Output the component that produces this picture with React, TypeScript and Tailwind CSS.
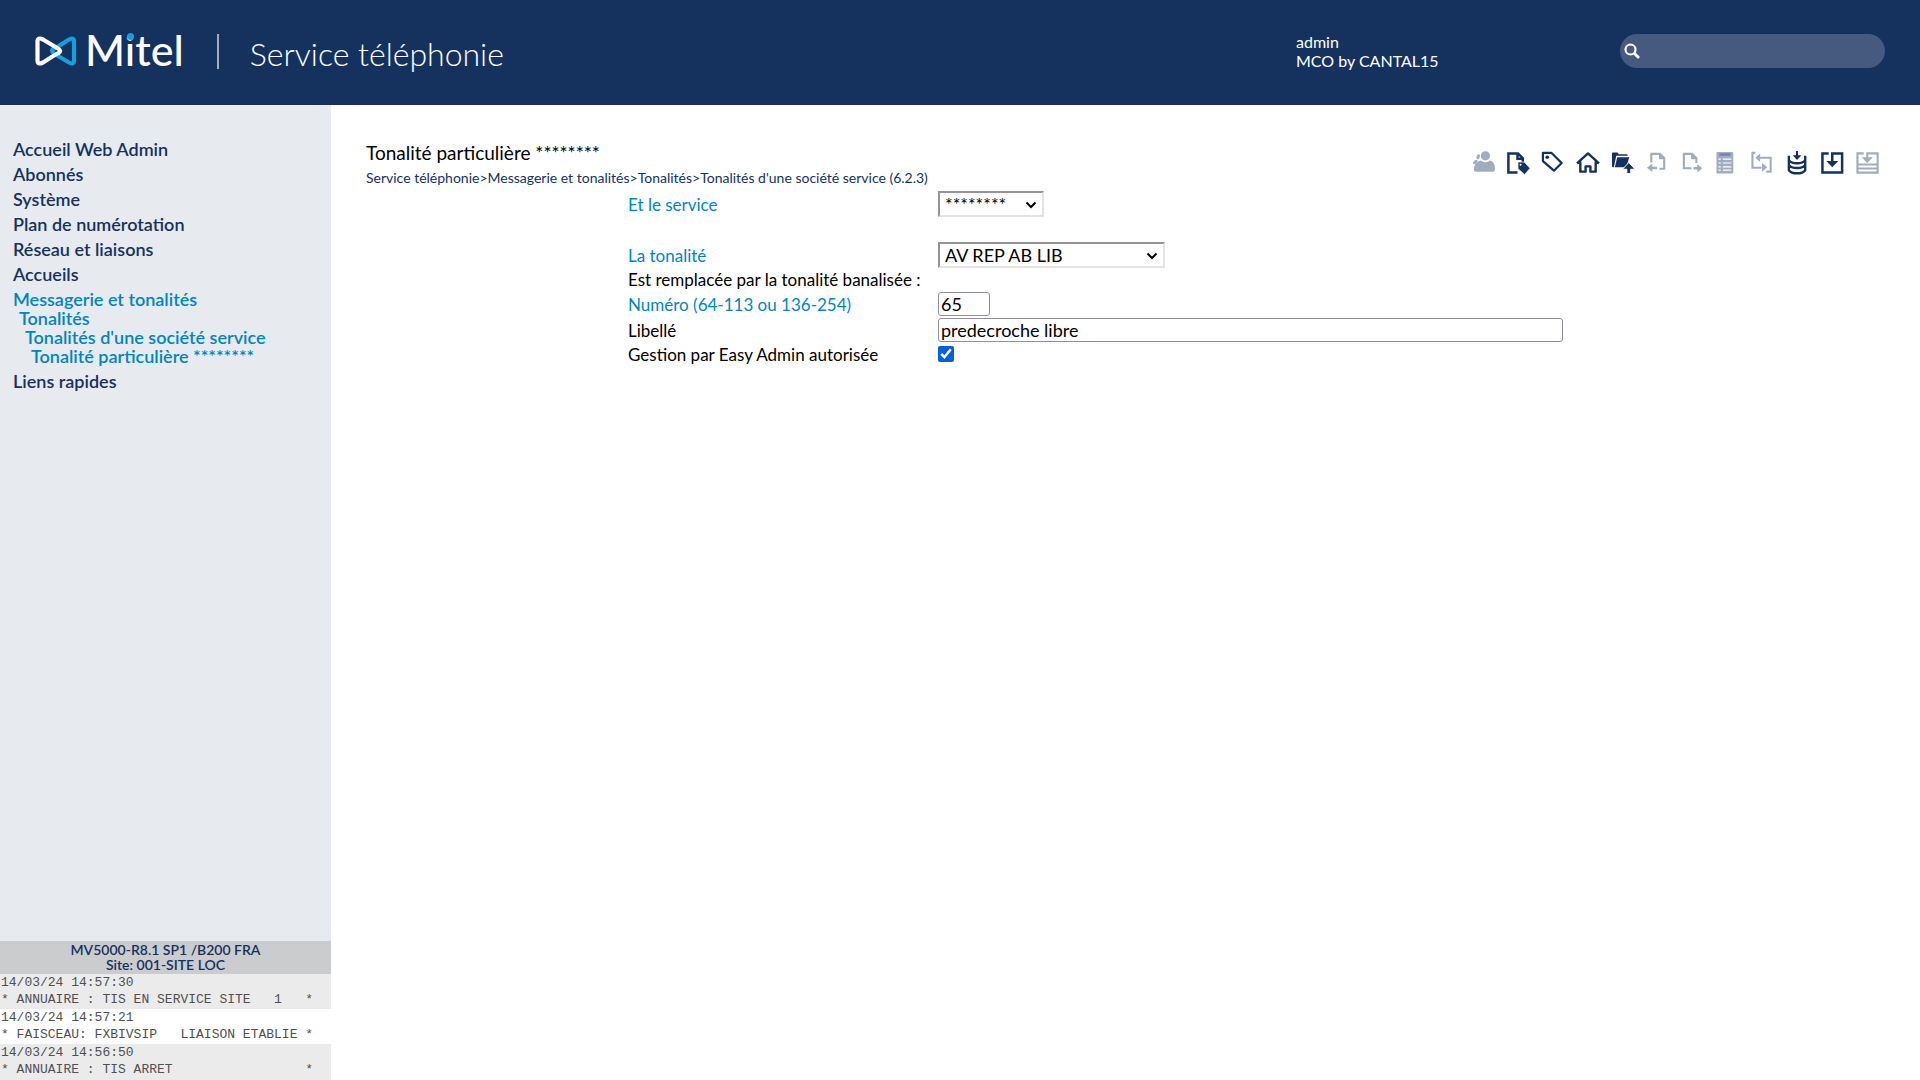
import { useState } from "react";
import type { ReactNode } from "react";

const menu = [
  { label: "Accueil Web Admin" },
  { label: "Abonnés" },
  { label: "Système" },
  { label: "Plan de numérotation" },
  { label: "Réseau et liaisons" },
  { label: "Accueils" },
  { label: "Messagerie et tonalités", open: true },
  { label: "Liens rapides" },
];

const subMenu = [
  { label: "Tonalités", indent: "pl-[6px]" },
  { label: "Tonalités d'une société service", indent: "pl-[12px]" },
  { label: "Tonalité particulière ********", indent: "pl-[18px]" },
];

const logs = [
  { time: "14/03/24 14:57:30", text: "* ANNUAIRE : TIS EN SERVICE SITE   1   *" },
  { time: "14/03/24 14:57:21", text: "* FAISCEAU: FXBIVSIP   LIAISON ETABLIE *" },
  { time: "14/03/24 14:56:50", text: "* ANNUAIRE : TIS ARRET                 *" },
];

const crumbs = ["Service téléphonie", "Messagerie et tonalités", "Tonalités", "Tonalités d'une société service (6.2.3)"];

const tools: { name: string; off?: boolean; art: ReactNode }[] = [
  {
    name: "Utilisateurs",
    off: true,
    art: (
      <g fill="currentColor">
        <circle cx="15" cy="5" r="4.800" />
        <path d="M5 21.500q-2 0-2-2c0-5 3-8.500 7-9.500q5 3.500 10 0c3.500 1 5 4.500 5 9q0 2.500-2 2.500z" />
        <ellipse cx="7.500" cy="6" rx="1.700" ry="2.700" transform="rotate(20 7.500 6)" />
        <ellipse cx="4.500" cy="11.500" rx="1.600" ry="2.900" transform="rotate(50 4.500 11.500)" />
      </g>
    ),
  },
  {
    name: "Page étiquetée",
    art: (
      <g>
        <path d="M12 22.500H2.500V2.500h10l5 5v5M12 2.500V8h5.500" fill="none" stroke="currentColor" strokeWidth="2.600" />
        <path d="M12.500 11.500h6.500l6 6.500-5.500 6.500-7-6z" fill="currentColor" stroke="#e7eaef" strokeWidth="0.800" />
        <circle cx="15.200" cy="14.300" r="1" fill="#fff" />
      </g>
    ),
  },
  {
    name: "Étiquette",
    art: (
      <g>
        <path d="M2 2h9l10.500 10.500-8 8L2 10.500z" fill="none" stroke="currentColor" strokeWidth="2.300" strokeLinejoin="round" />
        <circle cx="6.500" cy="6.500" r="1.900" fill="currentColor" />
      </g>
    ),
  },
  {
    name: "Accueil",
    art: (
      <path d="M1 13L12.500 2.500 24 13M4.500 11v10.500h5.500v-5.500h5v5.500h5.500V11" fill="none" stroke="currentColor" strokeWidth="2.500" strokeLinejoin="round" />
    ),
  },
  {
    name: "Dossier parent",
    art: (
      <g fill="currentColor">
        <path d="M1 2.500q0-1 1-1h4.500q1 0 1.500 2H16q1.500 0 1.500 1.500H5.500L3 17H2q-1 0-1-1z" />
        <path d="M6.500 6.500h12.500l-2.500 8.500-2 2H4z" />
        <path d="M18.500 12l6.500 7h-4.500v4.500h-4V19H12z" stroke="#fff" strokeWidth="1" />
      </g>
    ),
  },
  {
    name: "Page précédente",
    off: true,
    art: (
      <g>
        <path d="M5.500 12V3h9l4.500 4.500V18.500h-5" fill="none" stroke="currentColor" strokeWidth="2.200" />
        <path d="M13.500 2.500V8.500H19.500z" fill="currentColor" />
        <path d="M1 17.500l5.500-4.500v3.300h5v2.600h-5V22z" fill="currentColor" />
      </g>
    ),
  },
  {
    name: "Page suivante",
    off: true,
    art: (
      <g>
        <path d="M11 18H3V3h8.500l4.500 4.500V12.500" fill="none" stroke="currentColor" strokeWidth="2.200" />
        <path d="M10.500 2.500V8.500H16.500z" fill="currentColor" />
        <path d="M22 18l-5-4.500v3.200h-4v2.600h4V22.500z" fill="currentColor" />
      </g>
    ),
  },
  {
    name: "Liste",
    off: true,
    art: (
      <g>
        <rect x="0.500" y="1" width="17.500" height="22.500" rx="1" fill="currentColor" />
        <path d="M3.500 3.700h11.500" stroke="#7084a6" strokeWidth="2.500" />
        <path d="M2.500 8.500h2.500M7 8.500h9M2.500 12.500h2.500M7 12.500h9M2.500 16.500h2.500M7 16.500h9M2.500 20h2.500M7 20h9" stroke="#fff" strokeWidth="1.200" />
      </g>
    ),
  },
  {
    name: "Boucle",
    off: true,
    art: (
      <g>
        <path d="M4.500 2H1.500V17.500H11M8 7h12.500v14.500H16" fill="none" stroke="currentColor" strokeWidth="2.200" />
        <path d="M4.500 7l5-4.500v9zM17 17l-5.500-4.500v9z" fill="currentColor" />
      </g>
    ),
  },
  {
    name: "Base de données",
    art: (
      <g fill="none" stroke="currentColor">
        <path d="M3 5v15c3 4.300 14 4.300 17 0V5M3 9.500c3 4.300 14 4.300 17 0M3 14.500c3 4.300 14 4.300 17 0" strokeWidth="2.500" />
        <path d="M11.500 0v6" strokeWidth="2.200" />
        <path d="M7 4.500h9L11.500 9.500z" fill="currentColor" stroke="none" />
      </g>
    ),
  },
  {
    name: "Enregistrer",
    art: (
      <g>
        <path d="M8 2.500H1.500v20H22v-20H11.700V12" fill="none" stroke="currentColor" strokeWidth="2.600" />
        <path d="M5.500 10.500h12.500l-6.200 6.500z" fill="currentColor" />
      </g>
    ),
  },
  {
    name: "Tout enregistrer",
    off: true,
    art: (
      <g>
        <path d="M8 2.500H1.500v20H22.500v-20H11.700V8M1.500 14H22.500M1.500 18.200H22.500" fill="none" stroke="currentColor" strokeWidth="2.200" />
        <path d="M6 6.500h11.500l-5.800 6z" fill="currentColor" />
      </g>
    ),
  },
];

function Logo() {
  return (
    <a href="#" aria-label="Mitel" className="flex items-center gap-[8px] text-white">
      <svg width="42" height="30" viewBox="0 0 42 30" fill="none" strokeWidth="4.200" strokeLinejoin="round" strokeLinecap="round">
        <path d="M23 10.500L34 3.500Q39 0.800 39 5.500V24.500Q39 29.200 34 26.500L19 17.500Q15 14.500 19 12.500L23 10.500" stroke="#159fdb" />
        <path d="M19 19.500L8 26.500Q2.500 29.200 2.500 24.500V5.500Q2.500 0.800 8 3.500L23 12.500Q27 15 23.500 17L19 19.500" stroke="#fff" />
      </svg>
      <span className="pb-[3px] text-[43px] leading-[43px] font-medium">
        M
        <span className="relative">
          i
          <span className="absolute inset-x-0 top-[9px] mx-auto h-[7px] w-[7px] rounded-full bg-[#159fdb]" />
        </span>
        tel
      </span>
    </a>
  );
}

function Select({ id, value, width }: { id: string; value: string; width: string }) {
  return (
    <div className={"relative " + width}>
      <select
        id={id}
        className="block h-[26px] w-full appearance-none border-2 border-t-[#949494] border-l-[#949494] border-r-[#e3e3e3] border-b-[#e3e3e3] bg-white pl-[5px] text-[18px] leading-[22px] text-black"
      >
        <option>{value}</option>
      </select>
      <svg className="pointer-events-none absolute right-[7px] top-[10px]" width="12" height="8" viewBox="0 0 12 8" fill="none" stroke="#000" strokeWidth="2">
        <path d="M1.500 1.500L6 6l4.500-4.500" />
      </svg>
    </div>
  );
}

export default function App() {
  const [num, setNum] = useState("65");
  const [label, setLabel] = useState("predecroche libre");
  const [easy, setEasy] = useState(true);

  return (
    <div className="flex min-h-screen flex-col bg-white font-['Lato',sans-serif] text-[17px] leading-[19px] text-black">
      <header className="flex h-[105px] shrink-0 items-center bg-[#15325f] px-[35px] pb-[3px] text-white">
        <Logo />
        <div className="ml-[33px] h-[35px] w-[2px] bg-[#a1adbf]" />
        <h1 className="ml-[31px] flex-1 pt-[5px] text-[32px] leading-[38px] font-light">Service téléphonie</h1>
        <div className="w-[324px] text-[16px]">
          <div>admin</div>
          <div>MCO by CANTAL15</div>
        </div>
        <label className="flex h-[34px] w-[265px] items-center rounded-full bg-[#465a80] pl-[4px]">
          <svg width="16" height="16" viewBox="0 0 16 16" fill="none" stroke="#fff" strokeWidth="2.200" aria-hidden="true">
            <circle cx="6.500" cy="6.500" r="5" />
            <path d="M10 10l5 5" strokeWidth="2.800" />
          </svg>
          <input type="search" aria-label="Rechercher" className="ml-2 min-w-0 flex-1 bg-transparent outline-none" />
        </label>
      </header>

      <div className="flex flex-1">
        <aside className="flex w-[331px] shrink-0 flex-col justify-between bg-[#e7eaef]">
          <nav className="flex flex-col gap-[6px] pl-[13px] pt-[35px] text-[18px] font-semibold text-[#15325f]">
            {menu.map((m) =>
              m.open ? (
                <div key={m.label} className="flex flex-col text-[#0086bd]">
                  <a href="#">{m.label}</a>
                  {subMenu.map((s) => (
                    <a key={s.label} href="#" className={s.indent}>
                      {s.label}
                    </a>
                  ))}
                </div>
              ) : (
                <a key={m.label} href="#">
                  {m.label}
                </a>
              ),
            )}
          </nav>
          <footer>
            <div className="bg-[#cbccce] pb-[2px] pt-[1px] text-center text-[14px] leading-[15px] font-semibold text-[#15325f]">
              <div>MV5000-R8.1 SP1 /B200 FRA</div>
              <div>Site: 001-SITE LOC</div>
            </div>
            {logs.map((l) => (
              <div
                key={l.time}
                className="whitespace-pre pb-[1px] pl-[1px] font-['Liberation_Mono',monospace] text-[13px] leading-[17px] text-[#505050] even:bg-[#ebebeb] odd:bg-white last:pb-[2px]"
              >
                <div>{l.time}</div>
                <div>{l.text}</div>
              </div>
            ))}
          </footer>
        </aside>

        <main className="min-w-0 flex-1 pl-[35px] pr-[40px] pt-[37px]">
          <div className="flex items-start justify-between">
            <div>
              <h2 className="text-[19px] leading-[22px]">Tonalité particulière ********</h2>
              <nav className="mt-[5px] text-[14px] leading-[17px] text-[#15325f]">
                {crumbs.map((c, i) => (
                  <span key={c}>
                    {i > 0 && ">"}
                    <a href="#">{c}</a>
                  </span>
                ))}
              </nav>
            </div>
            <div className="mt-[9px] flex gap-[11px]">
              {tools.map((t) => (
                <button key={t.name} type="button" aria-label={t.name} disabled={t.off} className="text-[#15325f] disabled:text-[#a1adbf]">
                  <svg width="24" height="24" viewBox="0 0 25 25">
                    {t.art}
                  </svg>
                </button>
              ))}
            </div>
          </div>

          <form className="ml-[262px] mt-[5px] grid grid-cols-[310px_1fr] items-center">
            <label htmlFor="service" className="text-[#0086bd]">Et le service</label>
            <Select id="service" value="********" width="w-[106px]" />
            <div className="col-span-2 h-[25px]" />
            <label htmlFor="tonalite" className="text-[#0086bd]">La tonalité</label>
            <Select id="tonalite" value="AV REP AB LIB" width="w-[227px]" />
            <div className="col-span-2 py-[2px]">Est remplacée par la tonalité banalisée :</div>
            <label htmlFor="numero" className="text-[#0086bd]">Numéro (64-113 ou 136-254)</label>
            <input
              id="numero"
              value={num}
              onChange={(e) => setNum(e.target.value)}
              className="my-px h-[24px] w-[52px] rounded-[3px] border border-[#8f8f9d] px-[2px] text-[18px]"
            />
            <label htmlFor="libelle">Libellé</label>
            <input
              id="libelle"
              value={label}
              onChange={(e) => setLabel(e.target.value)}
              className="my-px h-[24px] w-full max-w-[625px] rounded-[3px] border border-[#8f8f9d] px-[2px] text-[18px]"
            />
            <label htmlFor="easy">Gestion par Easy Admin autorisée</label>
            <input
              id="easy"
              type="checkbox"
              checked={easy}
              onChange={(e) => setEasy(e.target.checked)}
              className="my-[3px] h-[16px] w-[16px] accent-[#0060df]"
            />
          </form>
        </main>
      </div>
    </div>
  );
}
